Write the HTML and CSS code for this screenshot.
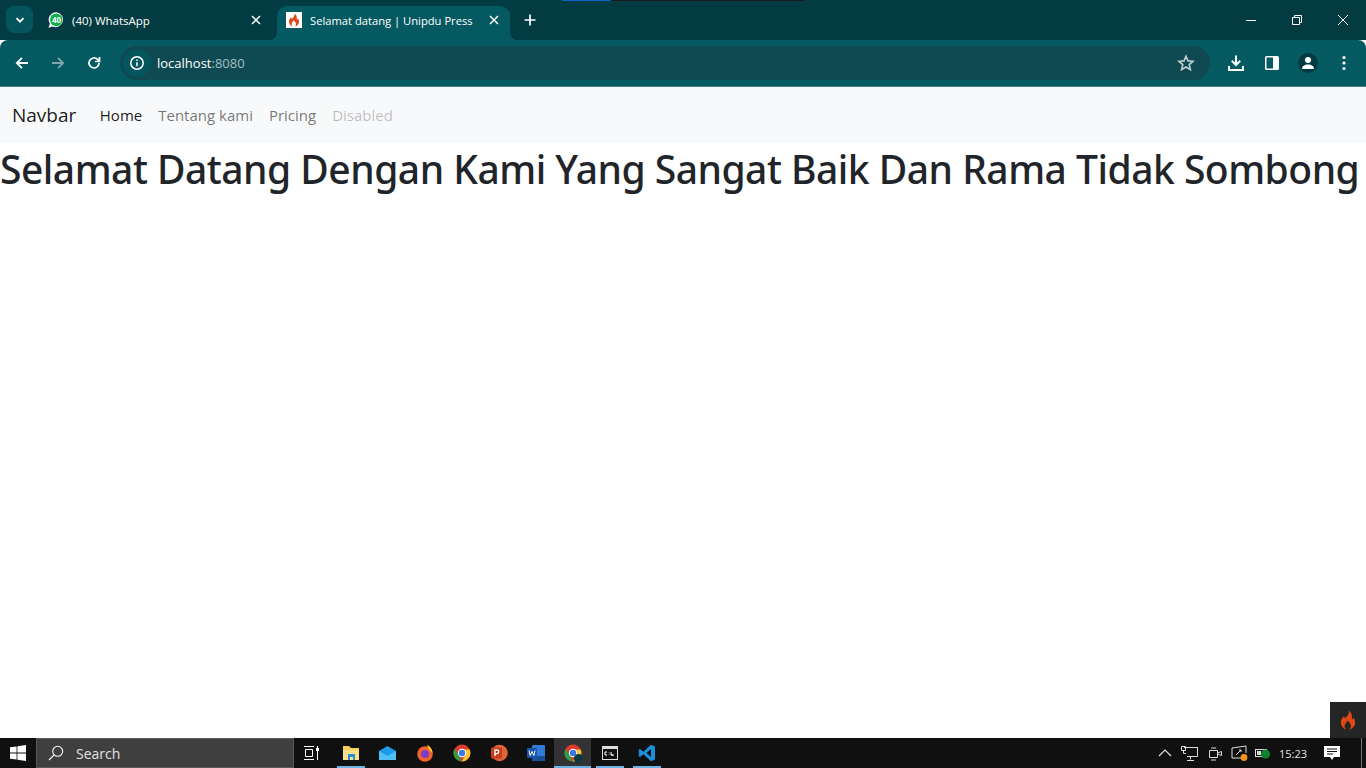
FILE: index.html
```html
<!DOCTYPE html>
<html lang="en">
<head>
  <meta charset="UTF-8" />
  <title>Selamat datang | Unipdu Press</title>
  <link rel="stylesheet" href="styles.css">
</head>
<body>

  <!-- Browser chrome -->
  <div class="tabstrip">
    <div class="tab-search">
      <svg width="10" height="10" viewBox="0 0 10 10"><path d="M1.500 3.200 5 6.700l3.500-3.500" fill="none" stroke="#fff" stroke-width="1.800"/></svg>
    </div>
    <div class="tab">
      <svg class="fav" width="16" height="16" viewBox="0 0 16 16">
        <path d="M8.300 .2A7.500 7.500 0 0 0 1.900 11.700L.4 15.800l4.300-1.200A7.500 7.500 0 1 0 8.300 .2z" fill="#fff"/>
        <circle cx="8.300" cy="7.700" r="6.300" fill="#12b04a"/>
      </svg>
      <span class="fav-count">40</span>
      <span class="tab-title">(40) WhatsApp</span>
      <svg class="tab-x" width="10" height="10" viewBox="0 0 10 10"><path d="M1 1l8 8M9 1 1 9" stroke="#fff" stroke-width="1.500"/></svg>
    </div>
    <div class="tab active">
      <div class="fav-box">
        <svg width="14" height="14" viewBox="0 0 14 14"><use href="#flame"/></svg>
      </div>
      <span class="tab-title">Selamat datang | Unipdu Press</span>
      <svg class="tab-x" width="10" height="10" viewBox="0 0 10 10"><path d="M1 1l8 8M9 1 1 9" stroke="#fff" stroke-width="1.500"/></svg>
    </div>
    <svg class="new-tab" width="12" height="12" viewBox="0 0 12 12"><path d="M6 .5v11M.5 6h11" stroke="#fff" stroke-width="1.700"/></svg>
    <div class="top-marks"><span class="mark-blue"></span><span class="mark-dark"></span></div>
    <div class="win-btns">
      <svg width="46" height="12" viewBox="0 0 46 12"><path d="M18 6.500h10" stroke="#fff"/></svg>
      <svg width="46" height="12" viewBox="0 0 46 12"><path d="M18.500 3.500h7v7h-7zM20.500 3.500v-2h7v7h-2" fill="none" stroke="#fff"/></svg>
      <svg width="46" height="12" viewBox="0 0 46 12"><path d="M18 1l10 10M28 1 18 11" stroke="#fff"/></svg>
    </div>
  </div>

  <div class="toolbar">
    <svg class="tool" width="16" height="16" viewBox="0 0 16 16"><path d="M14 8H3M8 2.800 2.800 8 8 13.200" fill="none" stroke="#fff" stroke-width="1.800"/></svg>
    <svg class="tool" width="16" height="16" viewBox="0 0 16 16"><path d="M2 8h11M8 2.800 13.200 8 8 13.200" fill="none" stroke="#7fa6aa" stroke-width="1.800"/></svg>
    <svg class="tool" width="16" height="16" viewBox="0 0 16 16"><path d="M13 8a5 5 0 1 1-1.500-3.600L13.500 6.500M13.500 2v4.500H9" fill="none" stroke="#fff" stroke-width="1.700"/></svg>
    <div class="omnibox">
      <div class="site-info">
        <svg width="16" height="16" viewBox="0 0 16 16"><circle cx="8" cy="8" r="6.200" fill="none" stroke="#fff" stroke-width="1.500"/><path d="M8 7.200v4M8 4.500v1.500" stroke="#fff" stroke-width="1.500"/></svg>
      </div>
      <span class="url">localhost<span class="url-port">:8080</span></span>
      <svg class="star" width="18" height="18" viewBox="0 0 18 18"><path d="M9 2.200l2 4.700 5 .4-3.800 3.300 1.200 5L9 13l-4.400 2.600 1.200-5L2 7.300l5-.4z" fill="none" stroke="#c3d0d2" stroke-width="1.600"/></svg>
    </div>
    <div class="tool-right">
      <svg width="18" height="18" viewBox="0 0 18 18"><path d="M9 1.500v9M4.800 6.800 9 11l4.200-4.200M2 12v4h14v-4" fill="none" stroke="#fff" stroke-width="2"/></svg>
      <svg width="16" height="16" viewBox="0 0 16 16"><rect x="1" y="1" width="14" height="14" rx="1.500" fill="#fff"/><rect x="2.500" y="2.500" width="6.500" height="11" fill="#055a62"/></svg>
      <div class="avatar">
        <svg width="14" height="14" viewBox="0 0 14 14"><circle cx="7" cy="4" r="3" fill="#fff"/><path d="M1 13c0-3 2.500-4.500 6-4.500s6 1.500 6 4.500z" fill="#fff"/></svg>
      </div>
      <svg width="4" height="16" viewBox="0 0 4 16"><circle cx="2" cy="2.500" r="1.600" fill="#fff"/><circle cx="2" cy="8" r="1.600" fill="#fff"/><circle cx="2" cy="13.500" r="1.600" fill="#fff"/></svg>
    </div>
  </div>

  <!-- Page -->
  <main class="page">
    <nav class="navbar">
      <a class="brand" href="#">Navbar</a>
      <a class="nav-link current" href="#">Home</a>
      <a class="nav-link" href="#">Tentang kami</a>
      <a class="nav-link" href="#">Pricing</a>
      <a class="nav-link disabled" href="#">Disabled</a>
    </nav>
    <h1>Selamat Datang Dengan Kami Yang Sangat Baik Dan Rama Tidak Sombong</h1>
    <div class="debug-bar">
      <svg width="20" height="22" viewBox="0 0 14 14"><use href="#flame"/></svg>
    </div>
  </main>

  <!-- Windows taskbar -->
  <footer class="taskbar">
    <div class="start">
      <svg width="16" height="16" viewBox="0 0 16 16"><path d="M0 2.300 6.600 1.400v6.200H0zM7.400 1.300 16 0v7.600H7.400zM0 8.400h6.600v6.200L0 13.700zM7.400 8.400H16V16l-8.600-1.300z" fill="#fff"/></svg>
    </div>
    <div class="task-search">
      <svg width="16" height="16" viewBox="0 0 16 16"><circle cx="9.700" cy="6.300" r="5" fill="none" stroke="#fff" stroke-width="1.100"/><path d="M6 10 1 15" stroke="#fff" stroke-width="1.100"/></svg>
      <span>Search</span>
    </div>
    <div class="task-view">
      <svg width="18" height="16" viewBox="0 0 18 16"><path d="M1 1.500h10M1 14.500h10M2.500 4.500h7v7h-7zM14.500 1v2M14.500 6v9" fill="none" stroke="#fff"/><rect x="13" y="3" width="3" height="3" fill="#fff"/></svg>
    </div>
    <div class="task-app open">
      <svg width="18" height="16" viewBox="0 0 18 16"><path d="M1 1h6l2 2h8v12H1z" fill="#f6cf5a"/><path d="M1 5h16v10H1z" fill="#fbe08a"/><path d="M6 9h7v6h-2v-3H8v3H6z" fill="#2a8fd8"/></svg>
    </div>
    <div class="task-app">
      <svg width="17" height="14" viewBox="0 0 17 14"><path d="M0 5 8.500 0 17 5v9H0z" fill="#1c9ce8"/><path d="M0 5l8.500 5L17 5v9H0z" fill="#4fc1f5"/></svg>
    </div>
    <div class="task-app">
      <svg width="18" height="18" viewBox="0 0 18 18"><circle cx="9" cy="10" r="7.800" fill="#f2602c"/><path d="M11 1c3 1 5.500 4 5.500 8L13 6z" fill="#fcbc2e"/><circle cx="9" cy="10" r="4" fill="#7b3fc6"/></svg>
    </div>
    <div class="task-app">
      <svg width="18" height="18" viewBox="0 0 18 18"><use href="#chrome"/></svg>
    </div>
    <div class="task-app">
      <svg width="18" height="18" viewBox="0 0 18 18"><circle cx="9.500" cy="9" r="8.300" fill="#e0643a"/><rect x="1" y="3.500" width="11" height="11" rx="1" fill="#c43e1c"/><path d="M5 12V6h2a1.800 1.800 0 0 1 0 3.600H5" fill="none" stroke="#fff" stroke-width="1.300"/></svg>
    </div>
    <div class="task-app">
      <svg width="18" height="16" viewBox="0 0 18 16"><rect x="5" y="0" width="13" height="16" rx="1" fill="#2f7bd6"/><rect x="5" y="11" width="13" height="5" fill="#1a4f9c"/><rect x="0" y="3" width="10" height="10" rx="1" fill="#1c56a8"/><path d="M2 5.500l1.200 5L5 6.500l1.800 4 1.200-5" fill="none" stroke="#fff"/></svg>
    </div>
    <div class="task-app running">
      <svg width="18" height="18" viewBox="0 0 18 18"><use href="#chrome"/></svg>
      <span class="chrome-badge"></span>
    </div>
    <div class="task-app open">
      <svg width="16" height="14" viewBox="0 0 16 14"><rect x=".5" y=".5" width="15" height="13" fill="#111" stroke="#ddd"/><rect x="1" y="1" width="14" height="2" fill="#ddd"/><path d="M5 6H3v3h2M7 6v.5M7 8.500V9M9 6v3h2M9 9h3" fill="none" stroke="#fff"/></svg>
    </div>
    <div class="task-app open">
      <svg width="18" height="18" viewBox="0 0 18 18"><path d="M13 .8 17 2.600v12.800L13 17.200 5.500 10.200 2 13 .8 12.200V5.800L2 5l3.500 2.800zM13 5 8.500 9l4.500 4z" fill="#1a8fdc"/></svg>
    </div>
    <div class="tray">
      <svg class="tray-up" width="14" height="8" viewBox="0 0 14 8"><path d="M1 7l6-6 6 6" fill="none" stroke="#ddd" stroke-width="1.200"/></svg>
      <svg class="tray-net" width="17" height="15" viewBox="0 0 17 15"><path d="M3 1.500h14M16.500 1.500v9H6M9.500 10.500v3M6 14.500h7M.5 .5h4v4h-4zM2.500 4.500v3H5" fill="none" stroke="#ddd"/></svg>
      <svg width="15" height="15" viewBox="0 0 15 15"><path d="M1.500 4.500h8v7h-8zM9.500 7l4-1.500v4l-4-1.500M3 2h5M3 14h5" fill="none" stroke="#ddd"/></svg>
      <svg class="tray-sync" width="18" height="16" viewBox="0 0 18 16"><path d="M1 3l14-2v2M1 3v10h10M15 3v5M5 10l5-5M8 5h2v2" fill="none" stroke="#ddd"/><circle cx="13" cy="12.500" r="3.400" fill="#f7941d"/></svg>
      <svg width="15" height="12" viewBox="0 0 15 12"><rect x=".5" y="2.500" width="11" height="7" fill="none" stroke="#ddd"/><rect x="2" y="4" width="4" height="4" fill="#ddd"/><circle cx="10.500" cy="7" r="4.500" fill="#12812d"/></svg>
      <span class="clock">15:23</span>
      <svg class="notif" width="16" height="16" viewBox="0 0 16 16"><path d="M0 1h16v11h-6l-2 3-2-3H0z" fill="#fff"/><path d="M3 4h10M3 6.500h10M3 9h6" stroke="#111"/></svg>
      <span class="show-desktop"></span>
    </div>
  </footer>

  <!-- Shared icon shapes -->
  <svg class="defs" width="0" height="0">
    <defs>
      <g id="flame">
        <path d="M7.500 .5c.6 2.400-1 3.600-2.300 5C4.600 6.100 4.300 5.300 4.400 4.200 2.800 5.500 2 7 2 8.800 2 11.500 4 13.300 6 13.700 4.700 12.800 4.300 11.600 4.800 10.300c.4-1 1.400-1.700 1.800-3 1.500 1.300 2.900 3.100 2.300 4.700-.2.700-.6 1.200-1.300 1.700 2.500-.4 4.400-2.200 4.400-4.900 0-1.300-.5-2.500-1.300-3.500-.1.700-.4 1.200-1 1.500C10.100 4.300 9.800 2 7.500 .5z" fill="#dd4814"/>
      </g>
      <g id="chrome">
        <circle cx="9" cy="9" r="8.500" fill="#dd3b2f"/>
        <path d="M1.600 4.800 5.600 11 9 17.500A8.500 8.500 0 0 1 1.600 4.800z" fill="#2f9e47"/>
        <path d="M9 5.500h7.600A8.500 8.500 0 0 1 9 17.500L12 11z" fill="#f6c52e"/>
        <circle cx="9" cy="9" r="4.200" fill="#fff"/>
        <circle cx="9" cy="9" r="3.200" fill="#3b78e7"/>
      </g>
    </defs>
  </svg>

</body>
</html>
```

FILE: styles.css
```css
* {
  box-sizing: border-box;
}
html, body {
  height: 100%;
}
body {
  margin: 0;
  height: 768px;
  overflow: hidden;
  display: flex;
  flex-direction: column;
  font-family: "Open Sans", "Noto Sans", sans-serif;
  background-color: #fff;
}
a {
  text-decoration: none;
}

/* Tab strip */
.tabstrip {
  height: 40px;
  background-color: #033b42;
  display: flex;
  align-items: flex-end;
  position: relative;
  flex-shrink: 0;
}
.tab-search {
  width: 27px;
  height: 27px;
  margin: 0 0 7px 6px;
  background-color: #05555d;
  border-radius: 8px;
  display: flex;
  align-items: center;
  justify-content: center;
}
.tab {
  width: 235px;
  height: 34px;
  padding: 0 7px 6px 15px;
  display: flex;
  align-items: center;
  gap: 8px;
  position: relative;
  color: #fff;
  font-size: 11.5px;
}
.tab.active {
  width: 233px;
  background-color: #055a62;
  border-radius: 10px 10px 0 0;
  margin-left: 9px;
  padding: 0 11px 6px 9px;
  font-size: 11.2px;
}
.tab.active::before,
.tab.active::after {
  content: "";
  position: absolute;
  bottom: 0;
  width: 8px;
  height: 8px;
}
.tab.active::before {
  left: -8px;
  background: radial-gradient(circle at 0 0, transparent 8px, #055a62 8.5px);
}
.tab.active::after {
  right: -8px;
  background: radial-gradient(circle at 100% 0, transparent 8px, #055a62 8.5px);
}
.fav {
  flex-shrink: 0;
}
.fav-count {
  position: absolute;
  left: 15px;
  top: 9px;
  width: 17px;
  font-size: 8px;
  font-weight: 700;
  line-height: 10px;
  text-align: center;
  color: #fff;
}
.fav-box {
  width: 16px;
  height: 16px;
  background-color: #fff;
  display: flex;
  align-items: center;
  justify-content: center;
  flex-shrink: 0;
}
.tab-title {
  flex: 1;
  min-width: 0;
  white-space: nowrap;
}
.tab-x {
  flex-shrink: 0;
}
.new-tab {
  margin: 0 0 14px 14px;
}
.top-marks {
  position: absolute;
  left: 562px;
  top: 0;
  display: flex;
}
.mark-blue {
  width: 49px;
  height: 1px;
  background-color: #0a63c9;
}
.mark-dark {
  width: 193px;
  height: 1px;
  background-color: #1a1a1a;
}
.win-btns {
  display: flex;
  align-items: center;
  margin-left: auto;
  height: 40px;
}

/* Toolbar */
.toolbar {
  height: 47px;
  background-color: #055a62;
  border-radius: 8px 8px 0 0;
  border-bottom: 1px solid #3d8085;
  display: flex;
  align-items: center;
  padding: 0 4px 0 14px;
  flex-shrink: 0;
}
.tool {
  margin-right: 20px;
}
.omnibox {
  width: 1090px;
  height: 34px;
  margin-left: -2px;
  background-color: #0f4a52;
  border-radius: 17px;
  display: flex;
  align-items: center;
  padding: 0 15px 0 3px;
}
.site-info {
  width: 28px;
  height: 28px;
  border-radius: 50%;
  background-color: #05555d;
  display: flex;
  align-items: center;
  justify-content: center;
  margin-right: 6px;
}
.url {
  flex: 1;
  color: #fff;
  font-size: 13px;
}
.url-port {
  color: #a5bfc2;
}
.tool-right {
  flex: 1;
  display: grid;
  grid-template-columns: repeat(4, 36px);
  align-items: center;
  justify-items: center;
  padding-left: 8px;
}
.avatar {
  width: 20px;
  height: 20px;
  border-radius: 50%;
  background-color: #033b42;
  display: flex;
  align-items: center;
  justify-content: center;
}

/* Page */
.page {
  flex: 1;
  position: relative;
  min-height: 0;
}
.navbar {
  height: 56px;
  background-color: #f8f9fa;
  display: flex;
  align-items: center;
  padding: 0 12px;
}
.brand {
  font-size: 19px;
  color: rgba(0, 0, 0, 0.9);
  margin-right: 15.5px;
}
.nav-link {
  font-size: 15px;
  padding: 0 8px;
  color: rgba(0, 0, 0, 0.55);
}
.nav-link.current {
  color: rgba(0, 0, 0, 0.9);
}
.nav-link.disabled {
  color: rgba(0, 0, 0, 0.25);
}
h1 {
  margin: 0;
  font-family: "Noto Sans", "Open Sans", sans-serif;
  font-size: 39px;
  font-weight: 500;
  letter-spacing: -0.5px;
  line-height: 52px;
  color: #212529;
  white-space: nowrap;
}
.debug-bar {
  position: absolute;
  right: 0;
  bottom: 0;
  width: 36px;
  height: 36px;
  background-color: #252525;
  display: flex;
  align-items: center;
  justify-content: center;
}

/* Taskbar */
.taskbar {
  height: 30px;
  background-color: #101010;
  display: flex;
  align-items: center;
  flex-shrink: 0;
}
.start {
  width: 36px;
  height: 30px;
  display: flex;
  align-items: center;
  justify-content: center;
}
.task-search {
  width: 258px;
  height: 30px;
  background-color: #3f3f3f;
  border: 1px solid #5a5a5a;
  display: flex;
  align-items: center;
  gap: 12px;
  padding-left: 11px;
  color: #e4e4e4;
  font-size: 14px;
}
.task-view {
  width: 36px;
  height: 30px;
  display: flex;
  align-items: center;
  justify-content: center;
  margin-right: 2px;
}
.task-app {
  width: 37px;
  height: 30px;
  display: flex;
  align-items: center;
  justify-content: center;
  position: relative;
}
.task-app.open::after {
  content: "";
  position: absolute;
  left: 5px;
  right: 4px;
  bottom: 0;
  height: 2px;
  background-color: #6cb4e6;
}
.task-app.running {
  background-color: #333;
  box-shadow: inset 0 -2px 0 #6cb4e6;
}
.chrome-badge {
  position: absolute;
  left: 20px;
  top: 16px;
  width: 9px;
  height: 9px;
  border-radius: 50%;
  background-color: #0b3b40;
}
.tray {
  margin-left: auto;
  display: flex;
  align-items: center;
  gap: 8px;
  color: #e4e4e4;
}
.tray-up {
  margin-right: 1px;
}
.tray-net {
  margin-right: 2px;
}
.tray-sync {
  margin-right: -2px;
}
.clock {
  font-size: 11px;
  margin: 0 9px 0 1px;
}
.notif {
  margin-right: 13px;
}
.show-desktop {
  width: 1px;
  height: 30px;
  background-color: #777;
  margin-right: 4px;
}
.defs {
  position: absolute;
}
```
